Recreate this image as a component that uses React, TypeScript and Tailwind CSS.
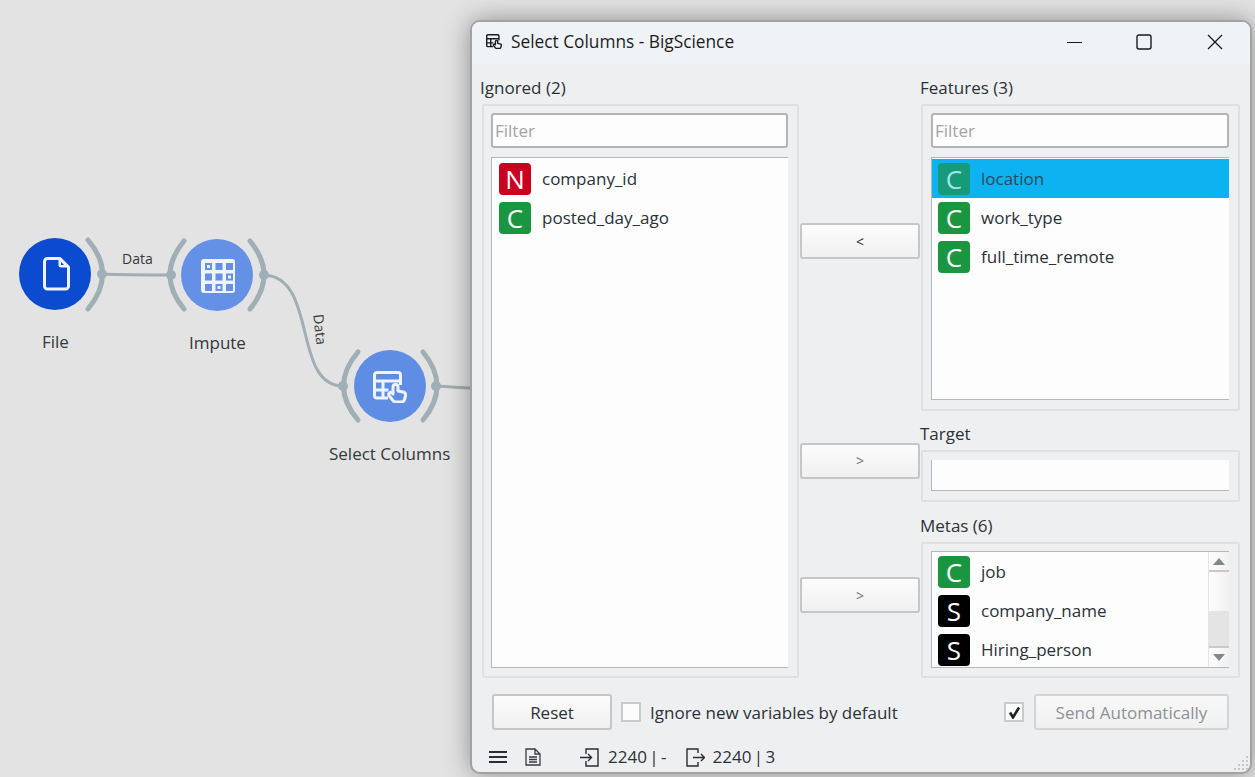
const SelectIcon = ({ className = "", fill }: { className?: string; fill: string }) => (
  <svg viewBox="0 0 34 32" fill="none" stroke="currentColor" strokeWidth="3" className={className}>
    <path d="M15 27H4a2.500 2.500 0 0 1-2.500-2.500V4A2.500 2.500 0 0 1 4 1.500h21A2.500 2.500 0 0 1 27.500 4v10" />
    <path d="M1.500 10h26M1.500 19h14M10 10v17" />
    <path
      d="M20 16a2.500 2.500 0 0 1 5 0v4l5 1c2 .5 3 2 2.500 4l-1 3.500c-.5 2-2 2.500-3.500 2.500h-5c-1.500 0-2.500-.5-3.500-2l-3.500-4.500c-1.200-2 1.500-4 3-2.500l1 1z"
      fill={fill}
      strokeLinejoin="round"
    />
  </svg>
)

const Canvas = () => {
  const cells = [0, 1, 2, 3, 4, 5, 6, 7, 8]
  return (
    <svg width="470" height="777" viewBox="0 0 470 777" fill="none" className="absolute left-0 top-0">
      <g stroke="#a0aeb5" strokeWidth="3">
        <path d="M102 274C125 275 150 275 171 275" />
        <path d="M264 275C318 277 292 386 343 386" />
        <path d="M436 386C450 387 460 388 472 388" />
      </g>
      <g stroke="#a0aeb5" strokeWidth="5" strokeLinecap="round">
        <path d="M88 240Q117 274 88 309" />
        <path d="M184 241Q156 275 184 309" />
        <path d="M250 241Q278 275 250 309" />
        <path d="M358 352Q329 386 358 420" />
        <path d="M423 352Q451 386 423 420" />
      </g>
      <g fill="#a0aeb5">
        <circle cx="102" cy="274" r="5" />
        <circle cx="171" cy="275" r="5" />
        <circle cx="264" cy="275" r="5" />
        <circle cx="343" cy="386" r="5" />
        <circle cx="436" cy="386" r="5" />
      </g>
      <circle cx="55" cy="274" r="36" fill="#0a4bd0" />
      <circle cx="217" cy="275" r="36" fill="#6490e6" />
      <circle cx="390" cy="386" r="36" fill="#5f8de4" />
      <path
        d="M47.500 258.500H60L68.500 267V286a3 3 0 0 1-3 3H47.500a3 3 0 0 1-3-3V261.500a3 3 0 0 1 3-3z"
        stroke="#eef3fd"
        strokeWidth="3"
        strokeLinejoin="round"
      />
      <path d="M58.500 258v7a2.500 2.500 0 0 0 2.500 2.500h8z" fill="#eef3fd" />
      <path d="M61 262v3h3z" fill="#0a4bd0" />
      <rect x="201" y="259" width="34" height="34" rx="3" fill="#eef3fd" />
      {cells.map((i) => {
        const x = 205 + (i % 3) * 10.500
        const y = 263 + Math.floor(i / 3) * 10.500
        const marked = i === 0 || i === 5 || i === 7
        return (
          <g key={i}>
            <rect x={x} y={y} width="7" height="7" fill="#6490e6" />
            {marked && <rect x={x + 2} y={y + 2} width="3" height="3" fill="#eef3fd" />}
          </g>
        )
      })}
    </svg>
  )
}

type Item = { name: string; letter: string; color: string; selected?: boolean }

const Row = ({ item, inset }: { item: Item; inset: string }) => (
  <div className={`flex h-[39px] items-center gap-[11px] ${inset} ${item.selected ? "bg-[#0db2f0]" : ""}`}>
    <span
      className={`flex h-[32px] w-[32px] shrink-0 items-center justify-center rounded-[4px] text-[26px] leading-none ${
        item.selected ? "bg-[#179a78] text-[#a3e3ea]" : `${item.color} text-white`
      }`}
    >
      {item.letter}
    </span>
    <span className={`pt-[1px] ${item.selected ? "text-[#2c4a5c]" : ""}`}>{item.name}</span>
  </div>
)

const Filter = () => (
  <div className="flex h-[35px] shrink-0 items-center rounded-[3px] border-2 border-[#b3b3b3] bg-[#fdfdfd] pl-[2px] pt-[1px] text-[#a3a3a3]">
    Filter
  </div>
)

const green = "bg-[#1a9641]"
const red = "bg-[#ca0020]"
const black = "bg-black"

const ignored: Item[] = [
  { name: "company_id", letter: "N", color: red },
  { name: "posted_day_ago", letter: "C", color: green },
]
const features: Item[] = [
  { name: "location", letter: "C", color: green, selected: true },
  { name: "work_type", letter: "C", color: green },
  { name: "full_time_remote", letter: "C", color: green },
]
const metas: Item[] = [
  { name: "job", letter: "C", color: green },
  { name: "company_name", letter: "S", color: black },
  { name: "Hiring_person", letter: "S", color: black },
]

const MoveButton = ({ label, className }: { label: string; className: string }) => (
  <button
    className={`h-[36px] w-[120px] self-center rounded-[3px] border-2 border-[#c4c6c8] bg-gradient-to-b from-[#fcfcfc] to-[#f0f0f0] text-[14px] ${className}`}
  >
    {label}
  </button>
)

const Dialog = () => (
  <div className="absolute left-[470px] top-[20px] flex h-[754px] w-[782px] flex-col overflow-hidden rounded-[10px] border-2 border-[#a2a2a2] bg-[#eeeff1] text-[17px] text-[#2b3138] shadow-[0_0_26px_rgba(0,0,0,0.38)]">
    <div className="flex h-[42px] shrink-0 items-center bg-[#eff3f8] pb-[3px] pl-[14px] text-[#1c1c1c]">
      <SelectIcon fill="#eff3f8" className="h-[15px] w-[16px] text-[#1c1c1c]" />
      <span className="ml-[9px] text-[17.300px]">Select Columns - BigScience</span>
      <svg width="156" height="16" viewBox="0 0 156 16" fill="none" stroke="#1a1a1a" className="ml-auto mr-[27px]">
        <path d="M0 8.500h15" strokeWidth="1.200" />
        <rect x="70" y="1" width="14" height="14" rx="2" strokeWidth="1.400" />
        <path d="M141 1l14 14M155 1l-14 14" strokeWidth="1.300" />
      </svg>
    </div>

    <div className="grid grid-cols-[320px_120px_320px] grid-rows-[333px_78px_163px] gap-y-[13px] pl-[8px] pt-[14px]">
      <div className="row-span-3 flex flex-col">
        <div className="mb-[6px] h-[20px] leading-[20px]">Ignored (2)</div>
        <div className="ml-[2px] flex w-[317px] flex-1 flex-col rounded-[2px] border-2 border-[#dfe0e2] pb-[8px] pl-[7px] pr-[9px] pt-[7px]">
          <Filter />
          <div className="mt-[9px] flex-1 border border-r-0 border-[#b5b7ba] bg-[#fdfdfd] pt-[1px]">
            {ignored.map((item) => (
              <Row key={item.name} item={item} inset="pl-[7px]" />
            ))}
          </div>
        </div>
      </div>

      <MoveButton label="<" className="mb-[7px]" />

      <div className="flex flex-col">
        <div className="mb-[6px] h-[20px] leading-[20px]">Features (3)</div>
        <div className="ml-[1px] flex w-[319px] flex-1 flex-col rounded-[2px] border-2 border-[#dfe0e2] pb-[9px] pl-[8px] pr-[9px] pt-[7px]">
          <Filter />
          <div className="mt-[9px] flex-1 border border-r-0 border-[#b5b7ba] bg-[#fdfdfd] pt-[1px]">
            {features.map((item) => (
              <Row key={item.name} item={item} inset="pl-[6px]" />
            ))}
          </div>
        </div>
      </div>

      <MoveButton label=">" className="col-start-2 mb-[5px] text-[#6f7378]" />

      <div className="col-start-3 flex flex-col">
        <div className="mb-[6px] h-[20px] leading-[20px]">Target</div>
        <div className="ml-[1px] flex w-[319px] flex-1 flex-col rounded-[2px] border-2 border-[#dfe0e2] pb-[9px] pl-[8px] pr-[9px] pt-[8px]">
          <div className="flex-1 border-b border-l border-[#b5b7ba] bg-[#fdfdfd]" />
        </div>
      </div>

      <MoveButton label=">" className="col-start-2 mb-[3px] text-[#6f7378]" />

      <div className="col-start-3 mt-[1px] flex flex-col">
        <div className="mb-[6px] h-[20px] leading-[20px]">Metas (6)</div>
        <div className="ml-[1px] flex w-[319px] flex-1 flex-col rounded-[2px] border-2 border-[#dfe0e2] pb-[8px] pl-[8px] pr-[9px] pt-[7px]">
          <div className="flex h-[117px] overflow-hidden border border-r-0 border-[#b5b7ba] bg-[#fdfdfd]">
            <div className="flex-1">
              {metas.map((item) => (
                <Row key={item.name} item={item} inset="pl-[6px]" />
              ))}
            </div>
            <div className="flex w-[21px] flex-col border-l border-[#e4e4e4] bg-gradient-to-r from-[#fdfdfd] to-[#f1f1f1]">
              <div className="flex h-[20px] items-center justify-center border-b-2 border-[#c9c9c9]">
                <svg width="12" height="7" viewBox="0 0 12 7" fill="#83878b">
                  <path d="M6 0l6 7H0z" />
                </svg>
              </div>
              <div className="mt-[39px] h-[35px] bg-[#e4e4e4]" />
              <div className="flex flex-1 items-center justify-center border-t-2 border-[#c9c9c9]">
                <svg width="12" height="7" viewBox="0 0 12 7" fill="#83878b">
                  <path d="M0 0h12L6 7z" />
                </svg>
              </div>
            </div>
          </div>
        </div>
      </div>
    </div>

    <div className="mt-[16px] flex items-center pl-[20px] pr-[21px]">
      <button className="h-[36px] w-[120px] rounded-[3px] border-2 border-[#c4c6c8] bg-gradient-to-b from-[#fcfcfc] to-[#f0f0f0] pt-[1px]">
        Reset
      </button>
      <span className="ml-[9px] h-[20px] w-[20px] border-2 border-[#c9cacc] bg-[#fcfcfc]" />
      <span className="ml-[9px] pt-[1px]">Ignore new variables by default</span>
      <span className="ml-auto flex h-[20px] w-[20px] items-center justify-center border-2 border-[#c9cacc] bg-[#fcfcfc]">
        <svg width="13" height="13" viewBox="0 0 13 13" fill="none" stroke="#1d2329" strokeWidth="2.600">
          <path d="M2 6.500l3 5 6-10" />
        </svg>
      </span>
      <button className="ml-[10px] h-[36px] w-[195px] rounded-[3px] border-2 border-[#d3d4d6] bg-gradient-to-b from-[#f8f8f8] to-[#f0f0f0] pt-[1px] text-[#8d9197]">
        Send Automatically
      </button>
    </div>

    <div className="mt-[17px] flex h-[20px] items-center pl-[17px] [word-spacing:-2px]">
      <svg width="18" height="14" viewBox="0 0 18 14" fill="none" stroke="#2a2d31" strokeWidth="2.200">
        <path d="M0 2h18M0 7h18M0 12h18" />
      </svg>
      <svg width="16" height="18" viewBox="0 0 16 18" fill="none" stroke="#3a3d41" strokeWidth="1.300" className="ml-[18px]">
        <path d="M1 1h9l5 5v11H1zM10 1v5h5M4 9h8M4 11.500h8M4 14h8" />
      </svg>
      <svg width="19" height="19" viewBox="0 0 19 19" fill="none" stroke="#2a2d31" strokeWidth="1.400" className="ml-[39px]">
        <path d="M6 6V1h12v17H6v-5M0 9.500h11M8 6l3.500 3.500L8 13" />
      </svg>
      <span className="ml-[9px]">2240 | -</span>
      <svg width="19" height="19" viewBox="0 0 19 19" fill="none" stroke="#2a2d31" strokeWidth="1.400" className="ml-[19px]">
        <path d="M12 5V1H1v17h11v-4M7 9.500h11M15 6l3.500 3.500L15 13" />
      </svg>
      <span className="ml-[8px]">2240 | 3</span>
    </div>

    <svg width="16" height="16" viewBox="0 0 16 16" fill="#c6c7c9" className="absolute bottom-[1px] right-[1px]">
      <path d="M13 1h2v2h-2zM9 5h2v2H9zM13 5h2v2h-2zM5 9h2v2H5zM9 9h2v2H9zM13 9h2v2h-2zM1 13h2v2H1zM5 13h2v2H5zM9 13h2v2H9zM13 13h2v2h-2z" />
    </svg>
  </div>
)

export default function App() {
  return (
    <div className="relative h-[777px] w-[1255px] overflow-hidden bg-[#e3e3e3] font-['Open_Sans',sans-serif] text-[#33383d]">
      <Canvas />
      <div className="absolute left-[122px] top-[250px] text-[14px] leading-[17px]">Data</div>
      <div className="absolute left-[305px] top-[321px] rotate-[84deg] text-[14px] leading-[17px]">Data</div>
      <div className="absolute left-[42px] top-[332px] text-[17px] leading-[20px]">File</div>
      <div className="absolute left-[189px] top-[333px] text-[17px] leading-[20px]">Impute</div>
      <div className="absolute left-[329px] top-[444px] text-[17px] leading-[20px]">Select Columns</div>
      <div className="absolute left-[373px] top-[371px] h-[32px] w-[34px] text-[#eef3fd]">
        <SelectIcon fill="#5f8de4" className="h-full w-full" />
      </div>
      <Dialog />
    </div>
  )
}
